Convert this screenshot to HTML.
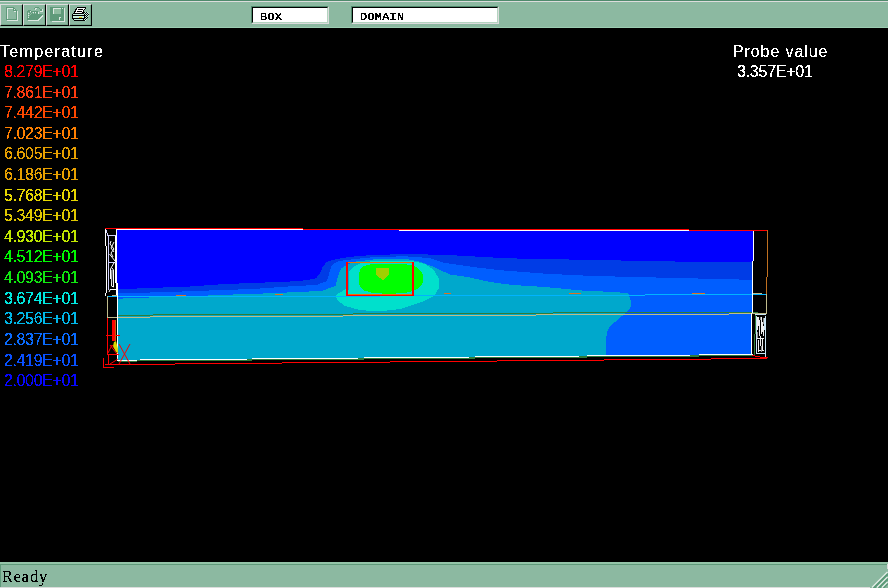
<!DOCTYPE html>
<html><head><meta charset="utf-8">
<style>
html,body{margin:0;padding:0;width:888px;height:588px;overflow:hidden;background:#000;}
*{box-sizing:border-box;}
.abs{position:absolute;}
#tb{position:absolute;left:0;top:0;width:888px;height:28px;background:#8cb9a1;}
#tb .l0{position:absolute;left:0;top:0;width:888px;height:1px;background:#4f8a6c;}
#tb .l1{position:absolute;left:0;top:1px;width:888px;height:1px;background:#dcdcdc;}
#tb .lb{position:absolute;left:0;top:27px;width:888px;height:1px;background:#9ccdb1;}
.btn{position:absolute;top:4px;width:23px;height:22px;border-top:1px solid #dcdcdc;border-left:1px solid #dcdcdc;border-right:1px solid #000;border-bottom:1px solid #000;}
.btn .in{position:absolute;left:0;top:0;right:0;bottom:0;border-right:1px solid #77a88b;border-bottom:1px solid #77a88b;}
.fld{position:absolute;top:6px;height:18px;border-top:1px solid #4f8a6c;border-left:1px solid #4f8a6c;border-right:1px solid #dcdcdc;border-bottom:1px solid #dcdcdc;}
.fld .in{position:absolute;left:0;top:0;right:0;bottom:0;background:#fff;border-top:1px solid #000;border-left:1px solid #000;border-right:1px solid #b4d4c0;border-bottom:1px solid #b4d4c0;}
.fld .t{position:absolute;filter:url(#crisp3);left:7px;top:1px;font:11.8px/16px "Liberation Mono",monospace;letter-spacing:0.3px;color:#000;}
.lg{position:absolute;left:4px;filter:url(#crisp2);font:16px/20px "Liberation Sans",sans-serif;white-space:nowrap;}
#sb{position:absolute;left:0;top:562px;width:888px;height:26px;background:#8cb9a1;}
</style></head><body>
<svg width="0" height="0" style="position:absolute"><defs><filter id="crisp" x="0" y="0" width="100%" height="100%" color-interpolation-filters="sRGB"><feComponentTransfer><feFuncA type="discrete" tableValues="0 1"/></feComponentTransfer></filter><filter id="crisp2" x="0" y="0" width="100%" height="100%" color-interpolation-filters="sRGB"><feComponentTransfer><feFuncA type="discrete" tableValues="0 0 0 0 1 1 1 1 1 1"/></feComponentTransfer></filter><filter id="crisp3" x="0" y="0" width="100%" height="100%" color-interpolation-filters="sRGB"><feComponentTransfer><feFuncA type="discrete" tableValues="0 0 1 1 1 1 1 1 1 1"/></feComponentTransfer></filter></defs></svg>
<div id="tb">
  <div class="l0"></div><div class="l1"></div><div class="lb"></div>
  <div class="btn" style="left:0"><div class="in"></div></div>
  <div class="btn" style="left:23px"><div class="in"></div></div>
  <div class="btn" style="left:46px"><div class="in"></div></div>
  <div class="btn" style="left:69px"><div class="in"></div></div>
  <svg class="abs" style="left:0;top:0" width="100" height="28" viewBox="0 0 100 28" shape-rendering="crispEdges">
    <!-- new doc (disabled) -->
    <g fill="#5f9a7a">
      <rect x="6" y="7" width="1" height="13"/><rect x="6" y="7" width="8" height="1"/><rect x="6" y="19" width="11" height="1"/>
      <rect x="16" y="11" width="1" height="9"/><rect x="13" y="7" width="1" height="4"/><rect x="13" y="10" width="4" height="1"/>
      <rect x="14" y="8" width="1" height="1"/><rect x="15" y="9" width="1" height="1"/>
    </g>
    <g fill="#dde8e2">
      <rect x="7" y="8" width="1" height="11"/><rect x="7" y="8" width="6" height="1"/>
      <rect x="7" y="20" width="11" height="1"/><rect x="17" y="11" width="1" height="10"/>
      <rect x="14" y="9" width="1" height="1"/><rect x="14" y="11" width="2" height="1"/>
    </g>
    <!-- open folder (disabled) -->
    <rect x="27" y="11" width="1" height="1" fill="#5f9a7a"/><rect x="27" y="12" width="1" height="1" fill="#5f9a7a"/><rect x="27" y="13" width="1" height="1" fill="#5f9a7a"/><rect x="27" y="14" width="1" height="1" fill="#5f9a7a"/><rect x="27" y="15" width="1" height="1" fill="#5f9a7a"/><rect x="27" y="16" width="1" height="1" fill="#5f9a7a"/><rect x="27" y="17" width="1" height="1" fill="#5f9a7a"/><rect x="27" y="18" width="1" height="1" fill="#5f9a7a"/><rect x="27" y="19" width="1" height="1" fill="#5f9a7a"/><rect x="28" y="10" width="1" height="1" fill="#5f9a7a"/><rect x="28" y="11" width="1" height="1" fill="#5f9a7a"/><rect x="28" y="13" width="1" height="1" fill="#dde8e2"/><rect x="28" y="15" width="1" height="1" fill="#dde8e2"/><rect x="28" y="17" width="1" height="1" fill="#dde8e2"/><rect x="28" y="18" width="1" height="1" fill="#5f9a7a"/><rect x="28" y="19" width="1" height="1" fill="#5f9a7a"/><rect x="28" y="20" width="1" height="1" fill="#dde8e2"/><rect x="29" y="10" width="1" height="1" fill="#5f9a7a"/><rect x="29" y="11" width="1" height="1" fill="#5f9a7a"/><rect x="29" y="12" width="1" height="1" fill="#5f9a7a"/><rect x="29" y="14" width="1" height="1" fill="#5f9a7a"/><rect x="29" y="16" width="1" height="1" fill="#5f9a7a"/><rect x="29" y="17" width="1" height="1" fill="#5f9a7a"/><rect x="29" y="18" width="1" height="1" fill="#5f9a7a"/><rect x="29" y="19" width="1" height="1" fill="#5f9a7a"/><rect x="29" y="20" width="1" height="1" fill="#dde8e2"/><rect x="30" y="10" width="1" height="1" fill="#5f9a7a"/><rect x="30" y="11" width="1" height="1" fill="#dde8e2"/><rect x="30" y="13" width="1" height="1" fill="#5f9a7a"/><rect x="30" y="15" width="1" height="1" fill="#5f9a7a"/><rect x="30" y="16" width="1" height="1" fill="#5f9a7a"/><rect x="30" y="17" width="1" height="1" fill="#5f9a7a"/><rect x="30" y="18" width="1" height="1" fill="#5f9a7a"/><rect x="30" y="19" width="1" height="1" fill="#5f9a7a"/><rect x="30" y="20" width="1" height="1" fill="#dde8e2"/><rect x="31" y="11" width="1" height="1" fill="#5f9a7a"/><rect x="31" y="12" width="1" height="1" fill="#5f9a7a"/><rect x="31" y="14" width="1" height="1" fill="#5f9a7a"/><rect x="31" y="15" width="1" height="1" fill="#5f9a7a"/><rect x="31" y="16" width="1" height="1" fill="#5f9a7a"/><rect x="31" y="17" width="1" height="1" fill="#5f9a7a"/><rect x="31" y="18" width="1" height="1" fill="#5f9a7a"/><rect x="31" y="19" width="1" height="1" fill="#5f9a7a"/><rect x="31" y="20" width="1" height="1" fill="#dde8e2"/><rect x="32" y="11" width="1" height="1" fill="#5f9a7a"/><rect x="32" y="13" width="1" height="1" fill="#5f9a7a"/><rect x="32" y="14" width="1" height="1" fill="#5f9a7a"/><rect x="32" y="15" width="1" height="1" fill="#5f9a7a"/><rect x="32" y="16" width="1" height="1" fill="#5f9a7a"/><rect x="32" y="17" width="1" height="1" fill="#5f9a7a"/><rect x="32" y="18" width="1" height="1" fill="#5f9a7a"/><rect x="32" y="19" width="1" height="1" fill="#5f9a7a"/><rect x="32" y="20" width="1" height="1" fill="#dde8e2"/><rect x="33" y="11" width="1" height="1" fill="#5f9a7a"/><rect x="33" y="12" width="1" height="1" fill="#dde8e2"/><rect x="33" y="14" width="1" height="1" fill="#5f9a7a"/><rect x="33" y="15" width="1" height="1" fill="#5f9a7a"/><rect x="33" y="16" width="1" height="1" fill="#5f9a7a"/><rect x="33" y="17" width="1" height="1" fill="#5f9a7a"/><rect x="33" y="18" width="1" height="1" fill="#5f9a7a"/><rect x="33" y="19" width="1" height="1" fill="#5f9a7a"/><rect x="33" y="20" width="1" height="1" fill="#dde8e2"/><rect x="34" y="8" width="1" height="1" fill="#5f9a7a"/><rect x="34" y="11" width="1" height="1" fill="#5f9a7a"/><rect x="34" y="12" width="1" height="1" fill="#5f9a7a"/><rect x="34" y="13" width="1" height="1" fill="#5f9a7a"/><rect x="34" y="14" width="1" height="1" fill="#5f9a7a"/><rect x="34" y="15" width="1" height="1" fill="#5f9a7a"/><rect x="34" y="16" width="1" height="1" fill="#5f9a7a"/><rect x="34" y="17" width="1" height="1" fill="#5f9a7a"/><rect x="34" y="18" width="1" height="1" fill="#5f9a7a"/><rect x="34" y="19" width="1" height="1" fill="#5f9a7a"/><rect x="34" y="20" width="1" height="1" fill="#dde8e2"/><rect x="35" y="7" width="1" height="1" fill="#5f9a7a"/><rect x="35" y="8" width="1" height="1" fill="#dde8e2"/><rect x="35" y="9" width="1" height="1" fill="#dde8e2"/><rect x="35" y="11" width="1" height="1" fill="#5f9a7a"/><rect x="35" y="12" width="1" height="1" fill="#dde8e2"/><rect x="35" y="14" width="1" height="1" fill="#5f9a7a"/><rect x="35" y="15" width="1" height="1" fill="#5f9a7a"/><rect x="35" y="16" width="1" height="1" fill="#5f9a7a"/><rect x="35" y="17" width="1" height="1" fill="#5f9a7a"/><rect x="35" y="18" width="1" height="1" fill="#5f9a7a"/><rect x="35" y="19" width="1" height="1" fill="#5f9a7a"/><rect x="35" y="20" width="1" height="1" fill="#dde8e2"/><rect x="36" y="7" width="1" height="1" fill="#5f9a7a"/><rect x="36" y="8" width="1" height="1" fill="#dde8e2"/><rect x="36" y="11" width="1" height="1" fill="#5f9a7a"/><rect x="36" y="12" width="1" height="1" fill="#5f9a7a"/><rect x="36" y="13" width="1" height="1" fill="#5f9a7a"/><rect x="36" y="14" width="1" height="1" fill="#5f9a7a"/><rect x="36" y="15" width="1" height="1" fill="#5f9a7a"/><rect x="36" y="16" width="1" height="1" fill="#5f9a7a"/><rect x="36" y="17" width="1" height="1" fill="#5f9a7a"/><rect x="36" y="18" width="1" height="1" fill="#5f9a7a"/><rect x="36" y="19" width="1" height="1" fill="#5f9a7a"/><rect x="36" y="20" width="1" height="1" fill="#dde8e2"/><rect x="37" y="7" width="1" height="1" fill="#5f9a7a"/><rect x="37" y="11" width="1" height="1" fill="#5f9a7a"/><rect x="37" y="12" width="1" height="1" fill="#5f9a7a"/><rect x="37" y="13" width="1" height="1" fill="#5f9a7a"/><rect x="37" y="14" width="1" height="1" fill="#5f9a7a"/><rect x="37" y="15" width="1" height="1" fill="#5f9a7a"/><rect x="37" y="16" width="1" height="1" fill="#5f9a7a"/><rect x="37" y="17" width="1" height="1" fill="#5f9a7a"/><rect x="37" y="18" width="1" height="1" fill="#5f9a7a"/><rect x="37" y="19" width="1" height="1" fill="#5f9a7a"/><rect x="37" y="20" width="1" height="1" fill="#dde8e2"/><rect x="38" y="7" width="1" height="1" fill="#5f9a7a"/><rect x="38" y="12" width="1" height="1" fill="#dde8e2"/><rect x="38" y="13" width="1" height="1" fill="#dde8e2"/><rect x="38" y="14" width="1" height="1" fill="#5f9a7a"/><rect x="38" y="15" width="1" height="1" fill="#5f9a7a"/><rect x="38" y="16" width="1" height="1" fill="#5f9a7a"/><rect x="38" y="17" width="1" height="1" fill="#5f9a7a"/><rect x="38" y="18" width="1" height="1" fill="#5f9a7a"/><rect x="38" y="19" width="1" height="1" fill="#dde8e2"/><rect x="39" y="8" width="1" height="1" fill="#5f9a7a"/><rect x="39" y="14" width="1" height="1" fill="#5f9a7a"/><rect x="39" y="15" width="1" height="1" fill="#5f9a7a"/><rect x="39" y="16" width="1" height="1" fill="#5f9a7a"/><rect x="39" y="17" width="1" height="1" fill="#5f9a7a"/><rect x="39" y="18" width="1" height="1" fill="#dde8e2"/><rect x="40" y="9" width="1" height="1" fill="#5f9a7a"/><rect x="40" y="10" width="1" height="1" fill="#5f9a7a"/><rect x="40" y="11" width="1" height="1" fill="#dde8e2"/><rect x="40" y="14" width="1" height="1" fill="#5f9a7a"/><rect x="40" y="15" width="1" height="1" fill="#5f9a7a"/><rect x="40" y="16" width="1" height="1" fill="#5f9a7a"/><rect x="40" y="17" width="1" height="1" fill="#dde8e2"/><rect x="41" y="9" width="1" height="1" fill="#5f9a7a"/><rect x="41" y="10" width="1" height="1" fill="#5f9a7a"/><rect x="41" y="11" width="1" height="1" fill="#dde8e2"/><rect x="41" y="14" width="1" height="1" fill="#5f9a7a"/><rect x="41" y="15" width="1" height="1" fill="#5f9a7a"/><rect x="41" y="16" width="1" height="1" fill="#dde8e2"/><rect x="42" y="9" width="1" height="1" fill="#dde8e2"/><rect x="42" y="10" width="1" height="1" fill="#dde8e2"/><rect x="42" y="11" width="1" height="1" fill="#dde8e2"/><rect x="42" y="14" width="1" height="1" fill="#5f9a7a"/><rect x="42" y="15" width="1" height="1" fill="#dde8e2"/>
    <rect x="39" y="19" width="1" height="1" fill="#dde8e2"/><rect x="40" y="18" width="1" height="1" fill="#dde8e2"/><rect x="41" y="17" width="1" height="1" fill="#dde8e2"/><rect x="42" y="16" width="1" height="1" fill="#dde8e2"/><rect x="38" y="20" width="1" height="1" fill="#dde8e2"/>
    <!-- save (disabled) -->
    <g fill="#5f9a7a">
      <rect x="50" y="7" width="14" height="14"/>
    </g>
    <g fill="#8fbca0"><rect x="54" y="9" width="7" height="5"/></g>
    <g fill="#dde8e2">
      <rect x="53" y="8" width="8" height="1"/><rect x="53" y="8" width="1" height="6"/>
      <rect x="62" y="8" width="1" height="1"/>
      <rect x="59" y="17" width="1" height="3"/><rect x="60" y="17" width="1" height="1"/>
      <rect x="52" y="21" width="13" height="1"/><rect x="64" y="8" width="1" height="14"/>
    </g>
    <!-- printer (enabled) -->
    <rect x="72" y="14" width="1" height="1" fill="#000000"/><rect x="72" y="15" width="1" height="1" fill="#000000"/><rect x="72" y="16" width="1" height="1" fill="#000000"/><rect x="72" y="17" width="1" height="1" fill="#000000"/><rect x="72" y="18" width="1" height="1" fill="#000000"/><rect x="73" y="13" width="1" height="1" fill="#000000"/><rect x="73" y="14" width="1" height="1" fill="#c8f0e0"/><rect x="73" y="15" width="1" height="1" fill="#000000"/><rect x="73" y="16" width="1" height="1" fill="#c8f0e0"/><rect x="73" y="17" width="1" height="1" fill="#c8f0e0"/><rect x="73" y="18" width="1" height="1" fill="#000000"/><rect x="73" y="19" width="1" height="1" fill="#000000"/><rect x="74" y="11" width="1" height="1" fill="#000000"/><rect x="74" y="12" width="1" height="1" fill="#000000"/><rect x="74" y="13" width="1" height="1" fill="#000000"/><rect x="74" y="14" width="1" height="1" fill="#c8f0e0"/><rect x="74" y="15" width="1" height="1" fill="#000000"/><rect x="74" y="16" width="1" height="1" fill="#c8f0e0"/><rect x="74" y="17" width="1" height="1" fill="#c8f0e0"/><rect x="74" y="18" width="1" height="1" fill="#000000"/><rect x="74" y="19" width="1" height="1" fill="#c8f0e0"/><rect x="74" y="20" width="1" height="1" fill="#000000"/><rect x="75" y="9" width="1" height="1" fill="#000000"/><rect x="75" y="10" width="1" height="1" fill="#000000"/><rect x="75" y="11" width="1" height="1" fill="#000000"/><rect x="75" y="12" width="1" height="1" fill="#ffffff"/><rect x="75" y="13" width="1" height="1" fill="#000000"/><rect x="75" y="14" width="1" height="1" fill="#c8f0e0"/><rect x="75" y="15" width="1" height="1" fill="#000000"/><rect x="75" y="16" width="1" height="1" fill="#c8f0e0"/><rect x="75" y="17" width="1" height="1" fill="#c8f0e0"/><rect x="75" y="18" width="1" height="1" fill="#000000"/><rect x="75" y="19" width="1" height="1" fill="#c8f0e0"/><rect x="75" y="20" width="1" height="1" fill="#000000"/><rect x="76" y="8" width="1" height="1" fill="#000000"/><rect x="76" y="9" width="1" height="1" fill="#000000"/><rect x="76" y="10" width="1" height="1" fill="#ffffff"/><rect x="76" y="11" width="1" height="1" fill="#ffffff"/><rect x="76" y="12" width="1" height="1" fill="#ffffff"/><rect x="76" y="13" width="1" height="1" fill="#000000"/><rect x="76" y="14" width="1" height="1" fill="#c8f0e0"/><rect x="76" y="15" width="1" height="1" fill="#000000"/><rect x="76" y="16" width="1" height="1" fill="#c8f0e0"/><rect x="76" y="17" width="1" height="1" fill="#c8f0e0"/><rect x="76" y="18" width="1" height="1" fill="#000000"/><rect x="76" y="19" width="1" height="1" fill="#c8f0e0"/><rect x="76" y="20" width="1" height="1" fill="#000000"/><rect x="77" y="7" width="1" height="1" fill="#000000"/><rect x="77" y="8" width="1" height="1" fill="#ffffff"/><rect x="77" y="9" width="1" height="1" fill="#ffffff"/><rect x="77" y="10" width="1" height="1" fill="#ffffff"/><rect x="77" y="11" width="1" height="1" fill="#000000"/><rect x="77" y="12" width="1" height="1" fill="#ffffff"/><rect x="77" y="13" width="1" height="1" fill="#000000"/><rect x="77" y="14" width="1" height="1" fill="#c8f0e0"/><rect x="77" y="15" width="1" height="1" fill="#000000"/><rect x="77" y="16" width="1" height="1" fill="#c8f0e0"/><rect x="77" y="17" width="1" height="1" fill="#c8f0e0"/><rect x="77" y="18" width="1" height="1" fill="#000000"/><rect x="77" y="19" width="1" height="1" fill="#c8f0e0"/><rect x="77" y="20" width="1" height="1" fill="#000000"/><rect x="78" y="7" width="1" height="1" fill="#000000"/><rect x="78" y="8" width="1" height="1" fill="#ffffff"/><rect x="78" y="9" width="1" height="1" fill="#000000"/><rect x="78" y="10" width="1" height="1" fill="#ffffff"/><rect x="78" y="11" width="1" height="1" fill="#000000"/><rect x="78" y="12" width="1" height="1" fill="#ffffff"/><rect x="78" y="13" width="1" height="1" fill="#000000"/><rect x="78" y="14" width="1" height="1" fill="#c8f0e0"/><rect x="78" y="15" width="1" height="1" fill="#000000"/><rect x="78" y="16" width="1" height="1" fill="#c8f0e0"/><rect x="78" y="17" width="1" height="1" fill="#c8f0e0"/><rect x="78" y="18" width="1" height="1" fill="#000000"/><rect x="78" y="19" width="1" height="1" fill="#c8f0e0"/><rect x="78" y="20" width="1" height="1" fill="#000000"/><rect x="79" y="7" width="1" height="1" fill="#000000"/><rect x="79" y="8" width="1" height="1" fill="#ffffff"/><rect x="79" y="9" width="1" height="1" fill="#000000"/><rect x="79" y="10" width="1" height="1" fill="#ffffff"/><rect x="79" y="11" width="1" height="1" fill="#000000"/><rect x="79" y="12" width="1" height="1" fill="#ffffff"/><rect x="79" y="13" width="1" height="1" fill="#000000"/><rect x="79" y="14" width="1" height="1" fill="#c8f0e0"/><rect x="79" y="15" width="1" height="1" fill="#000000"/><rect x="79" y="16" width="1" height="1" fill="#c8f0e0"/><rect x="79" y="17" width="1" height="1" fill="#e8c800"/><rect x="79" y="18" width="1" height="1" fill="#000000"/><rect x="79" y="19" width="1" height="1" fill="#c8f0e0"/><rect x="79" y="20" width="1" height="1" fill="#000000"/><rect x="80" y="7" width="1" height="1" fill="#000000"/><rect x="80" y="8" width="1" height="1" fill="#ffffff"/><rect x="80" y="9" width="1" height="1" fill="#000000"/><rect x="80" y="10" width="1" height="1" fill="#ffffff"/><rect x="80" y="11" width="1" height="1" fill="#000000"/><rect x="80" y="12" width="1" height="1" fill="#ffffff"/><rect x="80" y="13" width="1" height="1" fill="#000000"/><rect x="80" y="14" width="1" height="1" fill="#c8f0e0"/><rect x="80" y="15" width="1" height="1" fill="#000000"/><rect x="80" y="16" width="1" height="1" fill="#c8f0e0"/><rect x="80" y="17" width="1" height="1" fill="#e8c800"/><rect x="80" y="18" width="1" height="1" fill="#000000"/><rect x="80" y="19" width="1" height="1" fill="#c8f0e0"/><rect x="80" y="20" width="1" height="1" fill="#000000"/><rect x="81" y="7" width="1" height="1" fill="#000000"/><rect x="81" y="8" width="1" height="1" fill="#ffffff"/><rect x="81" y="9" width="1" height="1" fill="#000000"/><rect x="81" y="10" width="1" height="1" fill="#ffffff"/><rect x="81" y="11" width="1" height="1" fill="#000000"/><rect x="81" y="12" width="1" height="1" fill="#ffffff"/><rect x="81" y="13" width="1" height="1" fill="#000000"/><rect x="81" y="14" width="1" height="1" fill="#c8f0e0"/><rect x="81" y="15" width="1" height="1" fill="#000000"/><rect x="81" y="16" width="1" height="1" fill="#c8f0e0"/><rect x="81" y="17" width="1" height="1" fill="#e8c800"/><rect x="81" y="18" width="1" height="1" fill="#000000"/><rect x="81" y="19" width="1" height="1" fill="#c8f0e0"/><rect x="81" y="20" width="1" height="1" fill="#000000"/><rect x="82" y="7" width="1" height="1" fill="#000000"/><rect x="82" y="8" width="1" height="1" fill="#ffffff"/><rect x="82" y="9" width="1" height="1" fill="#000000"/><rect x="82" y="10" width="1" height="1" fill="#ffffff"/><rect x="82" y="11" width="1" height="1" fill="#ffffff"/><rect x="82" y="12" width="1" height="1" fill="#000000"/><rect x="82" y="13" width="1" height="1" fill="#000000"/><rect x="82" y="14" width="1" height="1" fill="#c8f0e0"/><rect x="82" y="15" width="1" height="1" fill="#000000"/><rect x="82" y="16" width="1" height="1" fill="#c8f0e0"/><rect x="82" y="17" width="1" height="1" fill="#c8f0e0"/><rect x="82" y="18" width="1" height="1" fill="#000000"/><rect x="82" y="19" width="1" height="1" fill="#c8f0e0"/><rect x="82" y="20" width="1" height="1" fill="#000000"/><rect x="83" y="7" width="1" height="1" fill="#000000"/><rect x="83" y="8" width="1" height="1" fill="#ffffff"/><rect x="83" y="9" width="1" height="1" fill="#ffffff"/><rect x="83" y="10" width="1" height="1" fill="#000000"/><rect x="83" y="11" width="1" height="1" fill="#000000"/><rect x="83" y="12" width="1" height="1" fill="#000000"/><rect x="83" y="13" width="1" height="1" fill="#000000"/><rect x="83" y="14" width="1" height="1" fill="#c8f0e0"/><rect x="83" y="15" width="1" height="1" fill="#000000"/><rect x="83" y="16" width="1" height="1" fill="#c8f0e0"/><rect x="83" y="17" width="1" height="1" fill="#c8f0e0"/><rect x="83" y="18" width="1" height="1" fill="#000000"/><rect x="83" y="19" width="1" height="1" fill="#000000"/><rect x="83" y="20" width="1" height="1" fill="#000000"/><rect x="84" y="7" width="1" height="1" fill="#000000"/><rect x="84" y="8" width="1" height="1" fill="#ffffff"/><rect x="84" y="9" width="1" height="1" fill="#000000"/><rect x="84" y="12" width="1" height="1" fill="#000000"/><rect x="84" y="13" width="1" height="1" fill="#c8f0e0"/><rect x="84" y="14" width="1" height="1" fill="#000000"/><rect x="84" y="15" width="1" height="1" fill="#000000"/><rect x="84" y="16" width="1" height="1" fill="#000000"/><rect x="84" y="17" width="1" height="1" fill="#000000"/><rect x="84" y="18" width="1" height="1" fill="#000000"/><rect x="84" y="19" width="1" height="1" fill="#c8f0e0"/><rect x="84" y="20" width="1" height="1" fill="#000000"/><rect x="85" y="7" width="1" height="1" fill="#000000"/><rect x="85" y="8" width="1" height="1" fill="#000000"/><rect x="85" y="12" width="1" height="1" fill="#c8f0e0"/><rect x="85" y="13" width="1" height="1" fill="#000000"/><rect x="85" y="14" width="1" height="1" fill="#c8f0e0"/><rect x="85" y="15" width="1" height="1" fill="#000000"/><rect x="85" y="16" width="1" height="1" fill="#c8f0e0"/><rect x="85" y="17" width="1" height="1" fill="#000000"/><rect x="85" y="18" width="1" height="1" fill="#c8f0e0"/><rect x="85" y="19" width="1" height="1" fill="#000000"/><rect x="85" y="20" width="1" height="1" fill="#c8f0e0"/><rect x="86" y="12" width="1" height="1" fill="#000000"/><rect x="86" y="13" width="1" height="1" fill="#c8f0e0"/><rect x="86" y="14" width="1" height="1" fill="#000000"/><rect x="86" y="15" width="1" height="1" fill="#c8f0e0"/><rect x="86" y="16" width="1" height="1" fill="#000000"/><rect x="86" y="17" width="1" height="1" fill="#c8f0e0"/><rect x="86" y="18" width="1" height="1" fill="#000000"/><rect x="86" y="19" width="1" height="1" fill="#c8f0e0"/><rect x="87" y="12" width="1" height="1" fill="#c8f0e0"/><rect x="87" y="13" width="1" height="1" fill="#000000"/><rect x="87" y="14" width="1" height="1" fill="#c8f0e0"/><rect x="87" y="15" width="1" height="1" fill="#000000"/><rect x="87" y="16" width="1" height="1" fill="#c8f0e0"/><rect x="87" y="17" width="1" height="1" fill="#000000"/><rect x="88" y="13" width="1" height="1" fill="#c8f0e0"/><rect x="88" y="14" width="1" height="1" fill="#000000"/><rect x="88" y="15" width="1" height="1" fill="#c8f0e0"/>
  </svg>
  <div class="fld" style="left:251px;width:78px"><div class="in"><div class="t">BOX</div></div></div>
  <div class="fld" style="left:351px;width:148px"><div class="in"><div class="t">DOMAIN</div></div></div>
</div>

<div class="lg" style="left:0;top:42px;color:#fff;letter-spacing:1.3px">Temperature</div>
<div class="lg" style="top:62px;color:#ff0000;letter-spacing:-0.375px">8.279E+01</div>
<div class="lg" style="top:83px;color:#ff3c10;letter-spacing:-0.375px">7.861E+01</div>
<div class="lg" style="top:103px;color:#ff4800;letter-spacing:-0.375px">7.442E+01</div>
<div class="lg" style="top:124px;color:#ff8000;letter-spacing:-0.375px">7.023E+01</div>
<div class="lg" style="top:144px;color:#e8a000;letter-spacing:-0.375px">6.605E+01</div>
<div class="lg" style="top:165px;color:#e8a000;letter-spacing:-0.375px">6.186E+01</div>
<div class="lg" style="top:186px;color:#e8d800;letter-spacing:-0.375px">5.768E+01</div>
<div class="lg" style="top:206px;color:#e0c800;letter-spacing:-0.375px">5.349E+01</div>
<div class="lg" style="top:227px;color:#c0e800;letter-spacing:-0.375px">4.930E+01</div>
<div class="lg" style="top:247px;color:#00f800;letter-spacing:-0.375px">4.512E+01</div>
<div class="lg" style="top:268px;color:#10e810;letter-spacing:-0.375px">4.093E+01</div>
<div class="lg" style="top:289px;color:#00e8e0;letter-spacing:-0.375px">3.674E+01</div>
<div class="lg" style="top:309px;color:#00b8e8;letter-spacing:-0.375px">3.256E+01</div>
<div class="lg" style="top:330px;color:#0a6cff;letter-spacing:-0.375px">2.837E+01</div>
<div class="lg" style="top:351px;color:#0a50ff;letter-spacing:-0.375px">2.419E+01</div>
<div class="lg" style="top:371px;color:#0808ff;letter-spacing:-0.375px">2.000E+01</div>
<div class="lg" style="left:733px;top:42px;color:#fff;letter-spacing:0.9px">Probe value</div>
<div class="lg" style="left:737px;top:62px;color:#fff;letter-spacing:-0.25px">3.357E+01</div>

<svg class="abs" style="left:0;top:0" width="888" height="588" viewBox="0 0 888 588">
<defs><clipPath id="dom"><polygon points="117,230 753,230 753,261 752,261 752,313 751,313 751,355 699,355 690,356 587,356 579,357 475,357 469,358 364,358 358,359 252,359 247,360 140,360 137,361 118,361 118,283 117,283"/></clipPath></defs>
<g clip-path="url(#dom)" shape-rendering="crispEdges">
<rect x="100" y="220" width="700" height="150" fill="#0000ff"/>
<polygon fill="#003ce6" points="110,289.6 150,288 190,286.5 222,284.2 246,283.2 273,282.2 295,281.3 308,280 316,278.3 320,273 323,266.4 327,261.7 335.5,259.3 348.6,257 363,255.7 375,255 405.7,254 445,254.9 481,256.8 506,258.3 545,259 613,260.4 660,261 690,262 760,261.5 760,370 110,370"/>
<polygon fill="#005eff" points="110,293.7 180,291.6 222,290 253,289 273,287.6 295,286 316.4,285 327,281 329.5,272.4 332,265 336.7,261.7 346,260 375,257 405,256.3 429.5,258 445,263 473,267 501,270.3 545,273.7 594,276 660,277.6 760,280 760,370 110,370"/>
<polygon fill="#00a8cc" points="110,299 180,296.3 212,295.4 226,294.7 253,294 273,293 300,292 322,290.8 335.5,286 338.5,274.8 340.8,268.8 345,265.8 354.5,261.7 375,259.3 405,258.7 420,261.7 434,267 441.4,270.6 450,274.5 467.5,277 490,282 512.6,285 545,287 583,290.6 615.4,292.1 628.2,293.2 629.7,297.2 631.2,302.3 630.7,306.4 628.7,310 626,312.5 622.6,315.6 617,320.2 611.8,324.8 607.8,329.4 606.2,338 606,370 110,370"/>
<polygon fill="#00e0cc" points="349,290 349,271 353,267 360,263.5 375,260.5 410,260.5 425,264 434,270 439.5,280 439,288 434,296 422,302 400,309 379,311.5 360,310 345,306 337,300 336,295 341,292 346,289"/>
<path fill="#00ff00" d="M359,274 C359,267 364,264 378,264 L400,264 C416,264 423.5,270 423.5,279 C423.5,287 414,293.5 396,293.5 L382,293.5 C366,293.5 359,289 359,283 Z"/>
<polygon fill="#a0d000" points="376,268 389,268 389,275 383,280 376,275"/>
</g>
<g shape-rendering="crispEdges" fill="none" stroke-width="1">
<!-- cyan line -->
<path stroke="#00b4ff" d="M107,296.5H380M380,295.5H645M645,294.5H766"/>
<path stroke="#c0bc8c" d="M753,293.5H762"/>
<!-- green + tan lines -->
<path stroke="#2e7d3a" d="M117,315.5H153M153,314.5H353M353,313.5H553M553,312.5H757"/>
<path stroke="#c0bc8c" d="M107,317.5H150M150,316.5H343M343,315.5H536M536,314.5H729M729,313.5H767M107.5,296V318M766.5,294V314"/>
<!-- domain edges white -->
<path stroke="#ffffff" d="M117,229.5H303M399,230.5H689M116.5,229V283M117.5,283V361M753.5,230V261M752.5,261V313M751.5,313V356M117,360.5H137M140,359.5H247M252,358.5H358M364,357.5H469M475,356.5H579M587,355.5H690M699,354.5H753"/>
<path stroke="#2e7d3a" d="M118,361.5H137M137,360.5H252M247,359.5H364M358,358.5H475M469,357.5H587M579,356.5H699M690,355.5H752"/>
<!-- red outer box -->
<path stroke="#ff0000" d="M105,228.5H303M303,229.5H689M689,230.5H768M105,364.5H175M175,363.5H282M282,362.5H390M390,361.5H497M497,360.5H604M604,359.5H711M711,358.5H767"/>
<path stroke="#c07020" d="M767.5,230V277M766.5,277V294"/>
<path stroke="#e07020" d="M176,295.5H186M275,294.5H283M444,293.5H451M569,293.5H581M692,293.5H705"/>
<!-- hot box -->
<path stroke="#f07000" d="M346,262.5H414M346,294.5H414"/>
<path stroke="#ff0000" d="M346,295.5H414M346.5,262V296M347.5,262V296M412.5,262V296M413.5,262V296"/>
<!-- left wall lattice -->
<path stroke="#ffffff" d="M105.5,229V246M106.5,246V293M105.5,293V296M115.5,236V283M116.5,283V296M110,289.5H117"/>
<path stroke="#d0d0ff" d="M106.5,230V233M107.5,233V235M108.5,235V290M107,235.5H116M108,262.5H116"/>
<path stroke="#c0bc8c" d="M112,295.5H117"/>
</g>
<g fill="none" stroke="#ffffff" stroke-width="1">
<polyline points="111,241 110,244 114,249 111,253 113,257"/>
<polyline points="114,242 111,248 114,252"/>
<polyline points="109.5,254 115,261"/>
<polyline points="114.5,262 110.5,269 110.5,279"/>
<polyline points="112,270 111.5,286 113.5,287 113.5,270 112,268"/>
<polyline points="109,292 110.5,289"/>
</g>
<!-- right wall lattice -->
<rect x="756" y="316" width="9" height="38" fill="#000"/>
<g shape-rendering="crispEdges" fill="none" stroke-width="1">
<path stroke="#2e7d3a" d="M755.5,315V334M754.5,334V356M753,312.5H758"/>
<path stroke="#c8e4f4" d="M765.5,316V357M755,314.5H766M756,353.5H765M764.5,318V330M756.5,316V353"/>
<path stroke="#f0f0f0" d="M757.5,317V330M758.5,317V326M759.5,320V336M761.5,317V334M762.5,322V332M760.5,336V346M758.5,340V352M762.5,338V350M763.5,326V336M757,338.5H764M759,350.5H764"/>
<path stroke="#909090" d="M757.5,332V338M760.5,317V320M763.5,318V324M761.5,346V352"/>
</g>
<g shape-rendering="crispEdges" fill="none" stroke-width="1" stroke="#ff0000">
<path d="M766,357.5H768M752,355.5H755M755,356.5H760M760,357.5H766"/>
<!-- left bottom red details -->
<path d="M107.5,318V355M106,335.5H120M107,354.5H119M108.5,354V365M103.5,358V368M103,367.5H114M108,364.5H118"/>
<rect x="112" y="320" width="3" height="21" fill="#ff0000" stroke="none"/>
<path stroke="#c06010" d="M115.5,320V341"/>
</g>
<g fill="none" stroke="#ff0000" stroke-width="1">
<polyline points="108,353 112,345 118,353"/>
<polyline points="110,345 117,354"/>
<polyline points="119,344 130,364"/>
<polyline points="130,344 119,364"/>
<polyline points="110,364 118,359"/>
</g>
<polygon fill="#d8d800" points="114,342 116,341 118,349 118,353 116,352 113,346"/>
</svg>










<div id="sb">
  <div class="abs" style="left:0;top:0;width:888px;height:2px;background:#94c4a8"></div>
  <div class="abs" style="left:0;top:2px;width:887px;height:1px;background:#5f9a7a"></div>
  <div class="abs" style="left:0;top:2px;width:1px;height:24px;background:#5f9a7a"></div>
  <div class="abs" style="left:887px;top:2px;width:1px;height:5px;background:#dcdcdc"></div>
  <div class="abs" style="left:0;top:25px;width:870px;height:1px;background:#dcdcdc"></div>
  <div class="abs" style="filter:url(#crisp2);left:2px;top:4.5px;font:16px/20px 'Liberation Serif',serif;letter-spacing:1px;color:#000">Ready</div>
  <svg class="abs" style="left:870px;top:8px" width="18" height="18" viewBox="0 0 18 18">
    <g stroke-width="1.4" fill="none">
      <path stroke="#e6eee9" d="M2,17.5 L17.5,2"/><path stroke="#5a9a78" d="M3.5,18 L18,3.5"/><path stroke="#5a9a78" d="M4.5,18 L18,4.5"/>
      <path stroke="#e6eee9" d="M7,17.5 L17.5,7"/><path stroke="#5a9a78" d="M8.5,18 L18,8.5"/><path stroke="#5a9a78" d="M9.5,18 L18,9.5"/>
      <path stroke="#e6eee9" d="M12,17.5 L17.5,12"/><path stroke="#5a9a78" d="M13.5,18 L18,13.5"/>
    </g>
  </svg>
</div>
</body></html>
